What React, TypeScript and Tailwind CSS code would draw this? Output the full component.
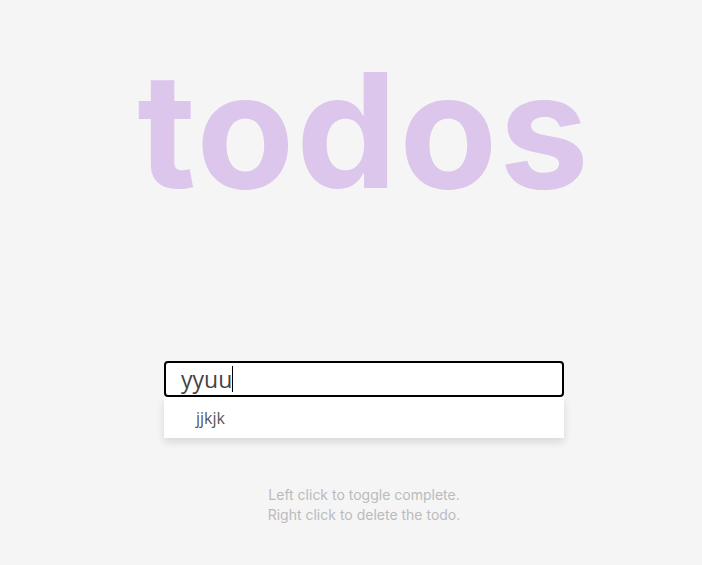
export default function App() {
  return (
    <div className="min-h-[565px] w-full bg-[#f5f5f5] pl-[26px] flex flex-col items-center font-['Poppins','Inter',sans-serif]">
      <h1 className="mt-[30px] text-[160px] leading-[200px] font-bold text-[#dcc6ec] tracking-[2px] font-['Inter',sans-serif]">
        todos
      </h1>
      <div className="mt-[131px] w-[400px] flex flex-col">
        <div className="h-[36px] border-2 border-black rounded-[4px] bg-white flex items-center pl-[15px]">
          <span className="text-[23px] text-[#444] font-['Open_Sans',sans-serif] leading-none">yyuu</span>
          <span className="w-px h-[26px] bg-black"></span>
        </div>
        <ul className="bg-white shadow-[0_4px_8px_rgba(0,0,0,0.12)]">
          <li className="h-[41px] flex items-center pl-[32px] text-[16px] text-[#555] font-['Open_Sans',sans-serif]">
            jjkjk
          </li>
        </ul>
      </div>
      <p className="mt-[47px] text-center text-[14px] leading-[20px] text-[#bbb] font-['Inter',sans-serif]">
        Left click to toggle complete.
        <br />
        Right click to delete the todo.
      </p>
    </div>
  );
}
